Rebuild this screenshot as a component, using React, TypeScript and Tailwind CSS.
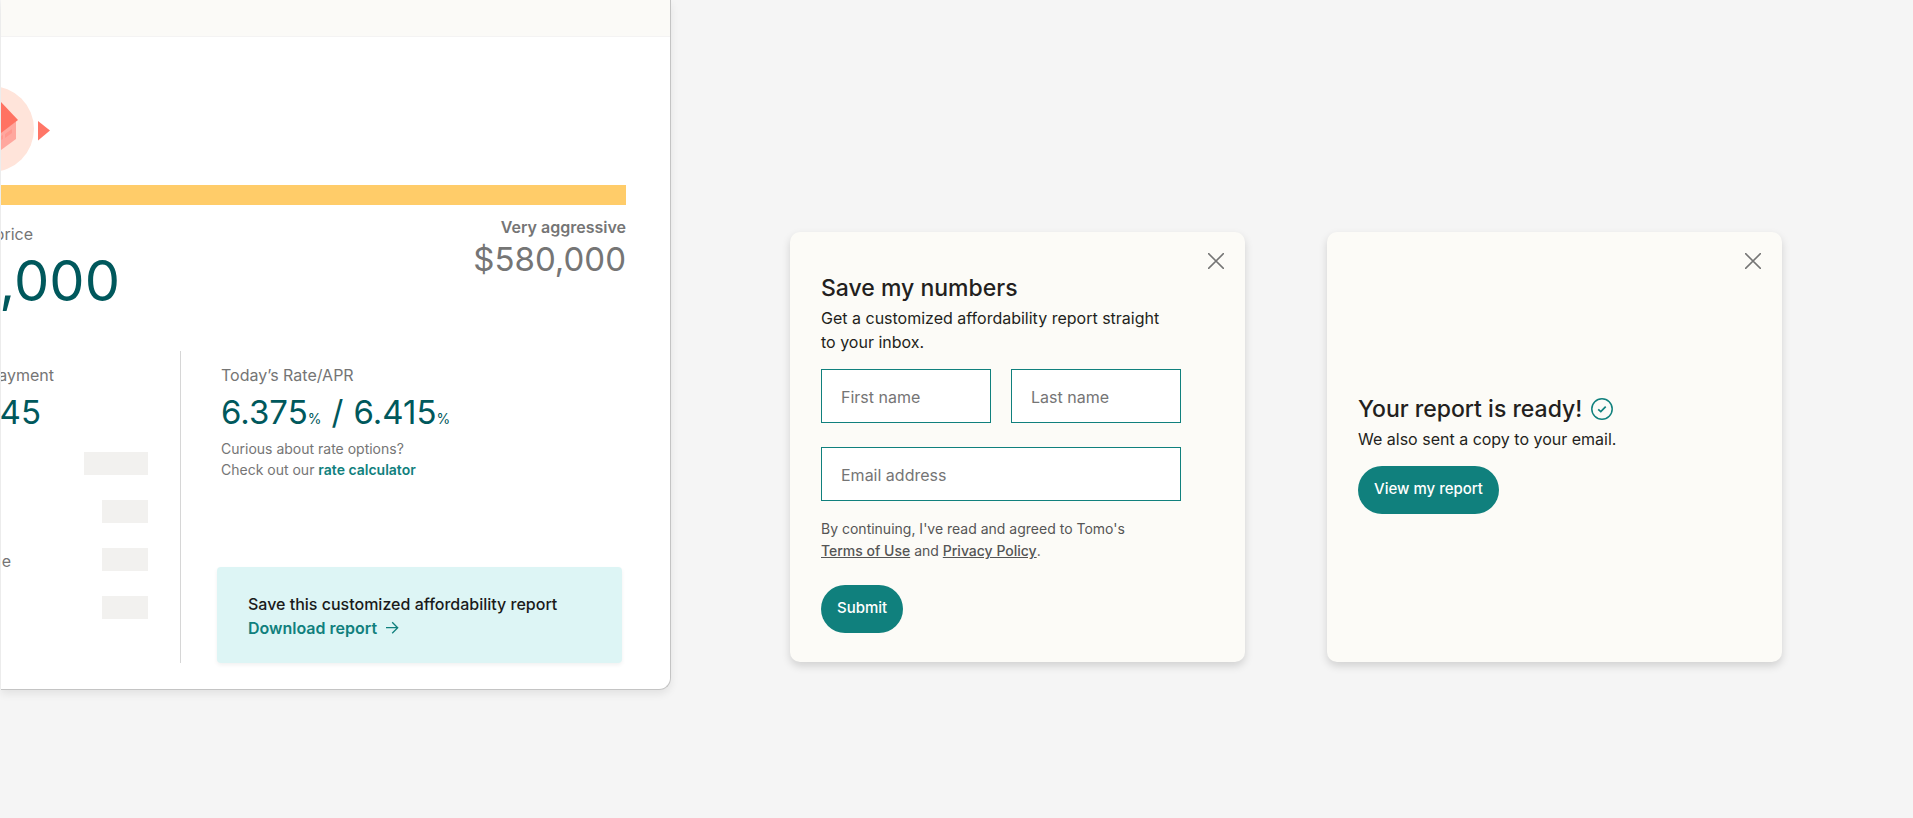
import type { ReactNode } from "react"
import { twMerge } from "tailwind-merge"

export default function App() {
	return (
		<main className="grid min-h-screen grid-cols-[671fr_1242fr] items-start bg-[#f5f5f5] font-['Inter','Liberation_Sans',sans-serif] text-[#231f20]">
			<AffordabilityCard />
			<div className="grid grid-cols-2 gap-[82px] pt-[232px] pr-[131px] pl-[119px]">
				<SaveNumbersDialog />
				<ReportReadyDialog />
			</div>
		</main>
	)
}

const costRows = [
	{ id: "principal", label: "", barClass: "w-16" },
	{ id: "taxes", label: "", barClass: "w-[46px]" },
	{ id: "insurance", label: "ce", barClass: "w-[46px]" },
	{ id: "fees", label: "", barClass: "w-[46px]" },
]

function AffordabilityCard() {
	return (
		<section className="ml-px overflow-hidden rounded-br-xl border-r border-b border-[#c4c4c4] bg-white pb-[26px] shadow-[0_4px_8px_rgba(0,0,0,0.08)]">
			<header className="h-[37px] border-b border-[#f4f3f3] bg-[#fbfaf7]" />
			<PriceHandle className="mt-[49px]" />

			<div className="mt-[13px] mr-11 h-5 bg-[#ffcc69]" />

			<div className="mr-11 flex justify-between text-[#757575]">
				<div className="pt-[17px]">
					<ClippedText className="w-8 leading-6">price</ClippedText>
					<ClippedText className="w-[119px] text-[56px] text-[#00585c] leading-[70px]">
						,000
					</ClippedText>
				</div>
				<div className="pt-[10px] text-right">
					<p className="font-semibold leading-6">Very aggressive</p>
					<p className="text-[33px] leading-10">$580,000</p>
				</div>
			</div>

			<div className="mt-[35px] flex h-[312px]">
				<div className="w-[180px] shrink-0 border-[#d6d6d6] border-r pt-3 pr-8 text-[#757575]">
					<ClippedText className="w-[53px] leading-6">ayment</ClippedText>
					<ClippedText className="mt-[5px] w-10 text-[#00585c] text-[33px] leading-10">
						45
					</ClippedText>
					<ul className="mt-5 flex flex-col gap-[25px]">
						{costRows.map((row) => (
							<li key={row.id} className="flex h-[23px] justify-between">
								<ClippedText className="w-[10px] leading-[26px]">
									{row.label}
								</ClippedText>
								<span className={twMerge("bg-[#f2f1ef]", row.barClass)} />
							</li>
						))}
					</ul>
				</div>

				<div className="flex flex-1 flex-col justify-between pt-3 pr-12 pl-9">
					<div className="pl-1 text-[#757575]">
						<h2 className="leading-6">Today’s Rate/APR</h2>
						<p className="mt-[5px] flex items-baseline gap-[10px] text-[#00585c] text-[33px] leading-10">
							<span>
								6.375<span className="text-sm">%</span>
							</span>
							<span>/</span>
							<span>
								6.415<span className="text-sm">%</span>
							</span>
						</p>
						<p className="mt-1.5 text-sm leading-[21px]">
							Curious about rate options?
							<br />
							Check out our{" "}
							<a href="#rates" className="font-semibold text-[#10807d]">
								rate calculator
							</a>
						</p>
					</div>

					<div className="rounded bg-[#ddf5f5] px-[31px] pt-[25px] pb-[23px] leading-6 shadow-[0_2px_4px_rgba(0,0,0,0.06)]">
						<p className="font-medium text-[#1a1a1a]">
							Save this customized affordability report
						</p>
						<a
							href="#download"
							className="flex items-center gap-2 font-semibold text-[#10807d]"
						>
							Download report
							<ArrowIcon />
						</a>
					</div>
				</div>
			</div>
		</section>
	)
}

function SaveNumbersDialog() {
	return (
		<Dialog>
			<form className="mt-[3px] pr-[43px]">
				<h2 className="font-medium text-[23px] leading-8">Save my numbers</h2>
				<p className="mt-0.5 leading-6">
					Get a customized affordability report straight
					<br />
					to your inbox.
				</p>
				<div className="mt-[15px] grid grid-cols-2 gap-x-5 gap-y-6">
					<Field label="First name" />
					<Field label="Last name" />
					<Field label="Email address" type="email" className="col-span-2" />
				</div>
				<p className="mt-[17px] text-[#555] text-sm leading-[22px]">
					By continuing, I've read and agreed to Tomo's
					<br />
					<a href="#terms" className="font-medium underline">
						Terms of Use
					</a>{" "}
					and{" "}
					<a href="#privacy" className="font-medium underline">
						Privacy Policy
					</a>
					.
				</p>
				<Button className="mt-[23px] mb-[29px]">Submit</Button>
			</form>
		</Dialog>
	)
}

function ReportReadyDialog() {
	return (
		<Dialog>
			<div className="flex flex-1 flex-col items-start justify-center pb-6">
				<h2 className="flex items-center gap-[9px] font-medium text-[23px] leading-8">
					Your report is ready!
					<CheckIcon />
				</h2>
				<p className="mt-0.5 leading-6">We also sent a copy to your email.</p>
				<Button className="mt-[15px]">View my report</Button>
			</div>
		</Dialog>
	)
}

function Dialog(props: { children: ReactNode }) {
	return (
		<section className="flex flex-col rounded-[10px] bg-[#fcfbf7] pt-[21px] pr-[21px] pl-[31px] shadow-[0_4px_8px_rgba(0,0,0,0.15)]">
			<button type="button" aria-label="Close" className="self-end">
				<svg
					viewBox="0 0 16 16"
					className="size-4"
					fill="none"
					stroke="#757575"
					strokeWidth="1.5"
					strokeLinecap="round"
				>
					<path d="M.6.6l14.8 14.8M15.4.6L.6 15.4" />
				</svg>
			</button>
			{props.children}
		</section>
	)
}

interface FieldProps {
	label: string
	type?: string
	className?: string
}

function Field(props: FieldProps) {
	return (
		<input
			type={props.type ?? "text"}
			aria-label={props.label}
			placeholder={props.label}
			className={twMerge(
				"h-[54px] w-full min-w-0 border border-[#10807d] bg-white px-[19px] pt-0.5 placeholder:text-[#757575]",
				props.className,
			)}
		/>
	)
}

function Button(props: { className?: string; children: ReactNode }) {
	return (
		<button
			type="button"
			className={twMerge(
				"h-12 rounded-full bg-[#10807d] px-4 pb-0.5 font-medium text-[15px] text-white",
				props.className,
			)}
		>
			{props.children}
		</button>
	)
}

// keeps the tail of a value when its column runs off the left edge
function ClippedText(props: { className?: string; children: ReactNode }) {
	return (
		<p className={twMerge("flex justify-end overflow-hidden", props.className)}>
			{props.children}
		</p>
	)
}

function PriceHandle(props: { className?: string }) {
	return (
		<svg
			viewBox="1 86 49 86"
			className={twMerge("h-[86px] w-[49px]", props.className)}
			aria-hidden="true"
		>
			<circle cx="-9" cy="129" r="43" fill="#ffe4da" />
			<path d="M1 132l15-11v18L1 150z" fill="#ffa79e" />
			<path d="M5 134l7-5v4l-7 5zM1 136l2-1v4l-2 1z" fill="#ff988e" />
			<path d="M1 102l17 18L1 133z" fill="#ff7262" />
			<path d="M38 121l12 9.500-12 10z" fill="#ff7667" />
		</svg>
	)
}

function ArrowIcon() {
	return (
		<svg
			viewBox="0 0 14 14"
			className="size-3.5"
			fill="none"
			stroke="currentColor"
			strokeWidth="1.3"
			aria-hidden="true"
		>
			<path d="M1 6.700h11.500M7.200 1.200l5.500 5.500-5.500 5.500" />
		</svg>
	)
}

function CheckIcon() {
	return (
		<svg
			viewBox="0 0 22 22"
			className="size-[22px]"
			fill="none"
			stroke="#10807d"
			strokeWidth="1.5"
			aria-hidden="true"
		>
			<circle cx="11" cy="11" r="10.200" />
			<path d="M7.200 11.300l2.600 2.300 4.900-4.900" strokeWidth="1.700" />
		</svg>
	)
}
